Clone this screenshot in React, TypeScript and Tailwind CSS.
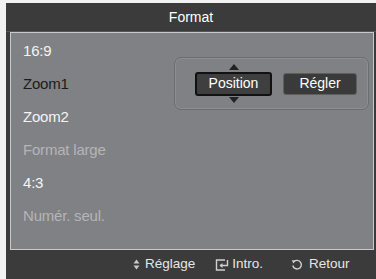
import React from "react";

const items = [
    { label: "16:9", tone: "text-[#f4f4f4]" },
    { label: "Zoom1", tone: "text-[#1c1c1c]" },
    { label: "Zoom2", tone: "text-[#f4f4f4]" },
    { label: "Format large", tone: "text-[#b4b5b8]" },
    { label: "4:3", tone: "text-[#f4f4f4]" },
    { label: "Numér. seul.", tone: "text-[#b4b5b8]" },
];

const UpDownIcon = () => (
    <svg width="7" height="11" viewBox="0 0 7 11" className="mr-[5px]">
        <path d="M3.5 0.5 L6.5 4.5 L0.5 4.5 Z" fill="#c8c8c8" />
        <path d="M3.5 10.5 L6.5 6.5 L0.5 6.5 Z" fill="#c8c8c8" />
    </svg>
);

const EnterIcon = () => (
    <svg width="15" height="12" viewBox="0 0 15 12" className="mr-[2px]">
        <path d="M10 1 H1.5 V11 H10" fill="none" stroke="#d0d0d0" strokeWidth="1.4" />
        <path d="M12.5 1 V6.5 H5" fill="none" stroke="#d0d0d0" strokeWidth="1.4" />
        <path d="M7.5 4 L4.5 6.5 L7.5 9 Z" fill="#d0d0d0" />
    </svg>
);

const ReturnIcon = () => (
    <svg width="12" height="12" viewBox="0 0 12 12" className="mr-[6px]">
        <path d="M3 2.6 A4.3 4.3 0 1 1 1.8 6.5" fill="none" stroke="#d0d0d0" strokeWidth="1.4" />
        <path d="M0.8 1.2 L4.6 1.6 L2.4 4.6 Z" fill="#d0d0d0" />
    </svg>
);

export default function App() {
    return (
        <div
            className="w-[376px] h-[279px] bg-[#f2f2f2] pt-[3px] pl-[6px] overflow-hidden"
            style={{ fontFamily: '"Liberation Sans", Arial, sans-serif' }}
        >
            <div className="flex flex-col h-full bg-[#3b3b3b]">
                <div className="h-[29px] flex items-center justify-center text-[14px] text-white border-b border-[#555]">
                    Format
                </div>
                <div className="relative ml-[4px] mr-[2px] h-[218px] bg-[#808184] border border-[#c9c9c9] pt-[2px]">
                    <div className="flex flex-col">
                        {items.map((item) => (
                            <div key={item.label} className={`h-[33px] flex items-center pl-[12px] text-[15px] tracking-[-0.2px] ${item.tone}`}>
                                {item.label}
                            </div>
                        ))}
                    </div>
                    <div className="absolute left-[163px] top-[24px] w-[195px] h-[53px] rounded-[7px] border border-[#6c6d70] shadow-[inset_0_0_0_1px_#8d8e91] flex items-center pl-[20px] gap-[11px]">
                        <div className="relative">
                            <svg width="10" height="6" viewBox="0 0 10 6" className="absolute left-[34px] -top-[8px]">
                                <path d="M5 0 L10 6 L0 6 Z" fill="#222" />
                            </svg>
                            <div className="w-[77px] h-[24px] bg-[#3f3f3f] border-2 border-[#111] rounded-[3px] flex items-center justify-center text-[14px] text-white">
                                Position
                            </div>
                            <svg width="10" height="6" viewBox="0 0 10 6" className="absolute left-[34px] -bottom-[7px]">
                                <path d="M5 6 L10 0 L0 0 Z" fill="#222" />
                            </svg>
                        </div>
                        <div className="w-[74px] h-[22px] bg-[#3a3a3a] border border-[#5e5e5e] rounded-[3px] flex items-center justify-center text-[14px] text-white">
                            Régler
                        </div>
                    </div>
                </div>
                <div className="flex-1 flex items-center pl-[127px] text-[13.5px] text-[#e6e6e6]">
                    <UpDownIcon />
                    <span>Réglage</span>
                    <span className="ml-[20px]" />
                    <EnterIcon />
                    <span>Intro.</span>
                    <span className="ml-[28px]" />
                    <ReturnIcon />
                    <span>Retour</span>
                </div>
            </div>
        </div>
    );
}
